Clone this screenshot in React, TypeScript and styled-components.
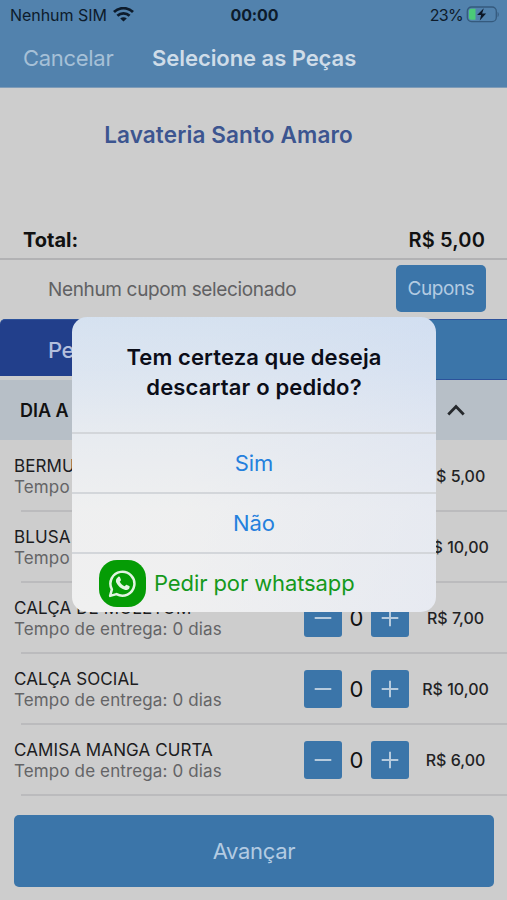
import React from "react";
import styled, { createGlobalStyle } from "styled-components";

const GlobalStyle = createGlobalStyle`
  * { box-sizing: border-box; }
  body { margin: 0; background: #cdcdcd; }
  button { border: 0; padding: 0; margin: 0; font: inherit; color: inherit; background: none; }
`;

const Screen = styled.div`
  position: relative;
  display: flex;
  flex-direction: column;
  width: 507px;
  height: 900px;
  overflow: hidden;
  background: #cdcdcd;
  color: #111;
  font-family: Inter, "Liberation Sans", sans-serif;
  white-space: nowrap;
`;

const Label = styled.span<{ $size: number; $weight?: number; $color?: string; $track?: number }>`
  font-size: ${(p) => p.$size}px;
  font-weight: ${(p) => p.$weight ?? 400};
  color: ${(p) => p.$color ?? "inherit"};
  letter-spacing: ${(p) => p.$track ?? 0}px;
`;

const Header = styled.header`
  flex: none;
  height: 88px;
  background: #5282ad;
  border-bottom: 1px solid #7f9cb8;
`;

const StatusBar = styled.div`
  display: grid;
  grid-template-columns: 1fr auto 1fr;
  align-items: center;
  height: 29px;
  padding: 0 8px 0 10px;
  color: #0d1b2b;
`;

const StatusSide = styled.div<{ $end?: boolean }>`
  display: flex;
  align-items: center;
  gap: ${(p) => (p.$end ? 3 : 6)}px;
  justify-content: ${(p) => (p.$end ? "flex-end" : "flex-start")};
`;

const NavBar = styled.nav`
  display: flex;
  align-items: center;
  height: 58px;
  padding-left: 23px;
`;

const CancelButton = styled.button`
  width: 129px;
  text-align: left;
`;

const ShopName = styled.div`
  flex: none;
  display: flex;
  justify-content: center;
  height: 133px;
  padding: 32px 50px 0 0;
  line-height: 30px;
`;

const TotalRow = styled.div`
  flex: none;
  display: flex;
  justify-content: space-between;
  align-items: center;
  height: 39px;
  padding: 0 22px 0 23px;
  border-bottom: 2px solid #b2b2b4;
`;

const CouponRow = styled.div`
  flex: none;
  display: flex;
  justify-content: space-between;
  align-items: center;
  height: 59px;
  padding: 0 21px 0 48px;
`;

const CouponButton = styled.button`
  width: 90px;
  height: 47px;
  margin-bottom: 2px;
  border-radius: 5px;
  background: #3b75a9;
`;

const Tabs = styled.div`
  flex: none;
  display: grid;
  grid-template-columns: 1fr 1fr;
  height: 61px;
`;

const Tab = styled.button<{ $active?: boolean }>`
  height: ${(p) => (p.$active ? 57 : 61)}px;
  padding: 3px 0 0 48px;
  text-align: left;
  border-top: 1px solid #2c529b;
  border-bottom: ${(p) => (p.$active ? "0" : "1px solid #2c529b")};
  border-top-left-radius: ${(p) => (p.$active ? 5 : 0)}px;
  background: ${(p) => (p.$active ? "#223f8b" : "#3b75a9")};
`;

const SectionHeader = styled.div`
  flex: none;
  display: flex;
  align-items: center;
  justify-content: space-between;
  height: 60px;
  padding: 0 42px 0 20px;
  background: #b7bfc7;
`;

const Item = styled.div`
  position: relative;
  flex: none;
  display: flex;
  align-items: center;
  height: 71px;
  padding: 0 0 0 14px;
  &::after {
    content: "";
    position: absolute;
    left: 21px;
    right: 0;
    bottom: -1px;
    height: 2px;
    background: #bbbbbd;
  }
`;

const ItemText = styled.div`
  display: flex;
  flex-direction: column;
  width: 290px;
  line-height: 21px;
  padding-top: 2px;
`;

const Stepper = styled.div`
  display: flex;
  align-items: center;
  width: 105px;
  padding-top: 1px;
`;

const StepButton = styled.button`
  display: flex;
  align-items: center;
  justify-content: center;
  width: 38px;
  height: 38px;
  border-radius: 3px;
  background: #3b75a9;
`;

const Quantity = styled.div`
  flex: 1;
  text-align: center;
`;

const Price = styled.div`
  flex: 1;
  text-align: center;
  padding: 1px 5px 0 0;
`;

const NextButton = styled.button`
  flex: none;
  height: 72px;
  margin: 20px 13px 0 14px;
  border-radius: 5px;
  background: #3b75a9;
`;

const Dialog = styled.div`
  position: absolute;
  left: 72px;
  top: 317px;
  width: 364px;
  height: 295px;
  border-radius: 15px;
  overflow: hidden;
  background:
    linear-gradient(100deg, rgba(240, 240, 240, 0.4) 35%, rgba(222, 228, 242, 0.5) 100%),
    linear-gradient(180deg, #c4d8f0 0%, #cfdef1 18%, #e2e8f0 40%, #eeeff0 65%, #f0f0f0 100%);
`;

const DialogTitle = styled.h1`
  display: flex;
  flex-direction: column;
  align-items: center;
  height: 115px;
  margin: 0;
  padding-top: 25px;
  line-height: 30px;
  font-size: 21px;
  color: #0b0d18;
`;

const DialogAction = styled.button<{ $left?: boolean }>`
  display: flex;
  align-items: center;
  justify-content: ${(p) => (p.$left ? "flex-start" : "center")};
  gap: 8px;
  width: 100%;
  height: 60.2px;
  padding-left: ${(p) => (p.$left ? 27 : 0)}px;
  border-top: 2px solid #d3d6da;
`;

const WhatsappBadge = styled.div`
  display: flex;
  align-items: center;
  justify-content: center;
  width: 47px;
  height: 47px;
  border-radius: 18px;
  background: #059c05;
`;

const items = [
  { name: "BERMUDA", price: "R$ 5,00" },
  { name: "BLUSA", price: "R$ 10,00" },
  { name: "CALÇA DE MOLETOM", price: "R$ 7,00" },
  { name: "CALÇA SOCIAL", price: "R$ 10,00" },
  { name: "CAMISA MANGA CURTA", price: "R$ 6,00" },
];

const WifiIcon = () => (
  <svg width="21" height="15" viewBox="0 0 21 15" fill="none" stroke="#0d1b2b" strokeWidth="2.8">
    <path d="M1 5.1C6.3-.1 14.7-.1 20 5.1" />
    <path d="M4.4 8.7c3.4-3.2 8.8-3.2 12.2 0" />
    <path d="M7.2 11.4c1.9-1.7 4.7-1.7 6.6 0L10.5 14.6z" fill="#0d1b2b" stroke="none" />
  </svg>
);

const BatteryIcon = () => (
  <svg width="33" height="17" viewBox="0 0 33 17">
    <rect x="1.3" y="1" width="29" height="14.6" rx="4.2" fill="none" stroke="#355a7d" strokeWidth="1.3" />
    <path d="M31.6 6v5c1.5-.6 1.5-4.4 0-5z" fill="#355a7d" />
    <path d="M5 2.8h4.5v11H5a2 2 0 0 1-2-2v-7a2 2 0 0 1 2-2z" fill="#4bcb78" />
    <path d="M17.8 2.2 11.1 9.1h4l-1.3 5.4 6.3-7.1h-4z" fill="#0b1626" />
  </svg>
);

const ChevronUp = () => (
  <svg width="18" height="12" viewBox="0 0 18 12" fill="none" stroke="#26292d" strokeWidth="2.8">
    <path d="m1.3 10.5 7.7-8 7.7 8" />
  </svg>
);

const SignIcon = ({ plus }: { plus?: boolean }) => (
  <svg width="18" height="18" viewBox="0 0 18 18" stroke="#b7cbdd" strokeWidth="2">
    <path d={plus ? "M.7 9h16.6M9 .7v16.6" : "M.7 9h16.6"} />
  </svg>
);

const WhatsappIcon = () => (
  <svg width="29" height="29" viewBox="0 0 30 30">
    <path
      d="M2.2 27.8 4 21.1A12.4 12.4 0 1 1 8.8 26z"
      fill="none"
      stroke="#e2f4e2"
      strokeWidth="2.6"
      strokeLinejoin="round"
    />
    <path
      d="M10.5 8.2c.5-.5 1.5-.5 1.8.2l1.1 2.7c.2.5-.1.9-1.2 2.2 1.2 2.3 2.8 3.7 5.1 4.6.9-1.1 1.3-1.7 1.7-1.6l3 1.4c.6.3.4 1.5.1 2.1-.7 1.4-2.7 2.2-4.3 1.8-4.5-1.1-7.4-3.8-9.3-7.7-.8-2.2-.1-4.2 2-5.7z"
      fill="#e2f4e2"
    />
  </svg>
);

export default function App() {
  return (
    <>
      <GlobalStyle />
      <Screen>
        <Header>
          <StatusBar>
            <StatusSide>
              <Label $size={16} $track={-0.05}>Nenhum SIM</Label>
              <WifiIcon />
            </StatusSide>
            <Label $size={16} $weight={700} $track={-0.1}>00:00</Label>
            <StatusSide $end>
              <Label $size={16} $track={-0.7}>23%</Label>
              <BatteryIcon />
            </StatusSide>
          </StatusBar>
          <NavBar>
            <CancelButton>
              <Label $size={22} $color="#a6c0d7" $track={-0.3}>Cancelar</Label>
            </CancelButton>
            <Label $size={22} $weight={600} $color="#cfdce8" $track={-0.05}>Selecione as Peças</Label>
          </NavBar>
        </Header>
        <ShopName>
          <Label $size={22.5} $weight={600} $color="#3c5590" $track={0.13}>Lavateria Santo Amaro</Label>
        </ShopName>
        <TotalRow>
          <Label $size={20} $weight={700}>Total:</Label>
          <Label $size={20} $weight={600} $track={0.15}>R$ 5,00</Label>
        </TotalRow>
        <CouponRow>
          <Label $size={19} $color="#616163" $track={-0.35}>Nenhum cupom selecionado</Label>
          <CouponButton>
            <Label $size={19} $color="#b3cbe2" $track={-0.4}>Cupons</Label>
          </CouponButton>
        </CouponRow>
        <Tabs>
          <Tab $active>
            <Label $size={22} $weight={500} $color="#b4bfdd" $track={-0.4}>Peças</Label>
          </Tab>
          <Tab />
        </Tabs>
        <SectionHeader>
          <Label $size={18} $weight={600}>DIA A DIA</Label>
          <ChevronUp />
        </SectionHeader>
        {items.map((item) => (
          <Item key={item.name}>
            <ItemText>
              <Label $size={17} $color="#1c1c1e" $track={0.1}>{item.name}</Label>
              <Label $size={17} $color="#646466" $track={0.13}>Tempo de entrega: 0 dias</Label>
            </ItemText>
            <Stepper>
              <StepButton><SignIcon /></StepButton>
              <Quantity><Label $size={22}>0</Label></Quantity>
              <StepButton><SignIcon plus /></StepButton>
            </Stepper>
            <Price><Label $size={16} $weight={450} $color="#222224">{item.price}</Label></Price>
          </Item>
        ))}
        <NextButton>
          <Label $size={22} $color="#b3cbe2" $track={-0.3}>Avançar</Label>
        </NextButton>
        <Dialog role="dialog">
          <DialogTitle>
            <Label $size={22} $weight={600} $track={0.1}>Tem certeza que deseja</Label>
            <Label $size={22} $weight={600} $track={0.15}>descartar o pedido?</Label>
          </DialogTitle>
          <DialogAction>
            <Label $size={22} $color="#2480dd">Sim</Label>
          </DialogAction>
          <DialogAction>
            <Label $size={22} $color="#2480dd">Não</Label>
          </DialogAction>
          <DialogAction $left>
            <WhatsappBadge><WhatsappIcon /></WhatsappBadge>
            <Label $size={22} $color="#15991b" $track={-0.1}>Pedir por whatsapp</Label>
          </DialogAction>
        </Dialog>
      </Screen>
    </>
  );
}
